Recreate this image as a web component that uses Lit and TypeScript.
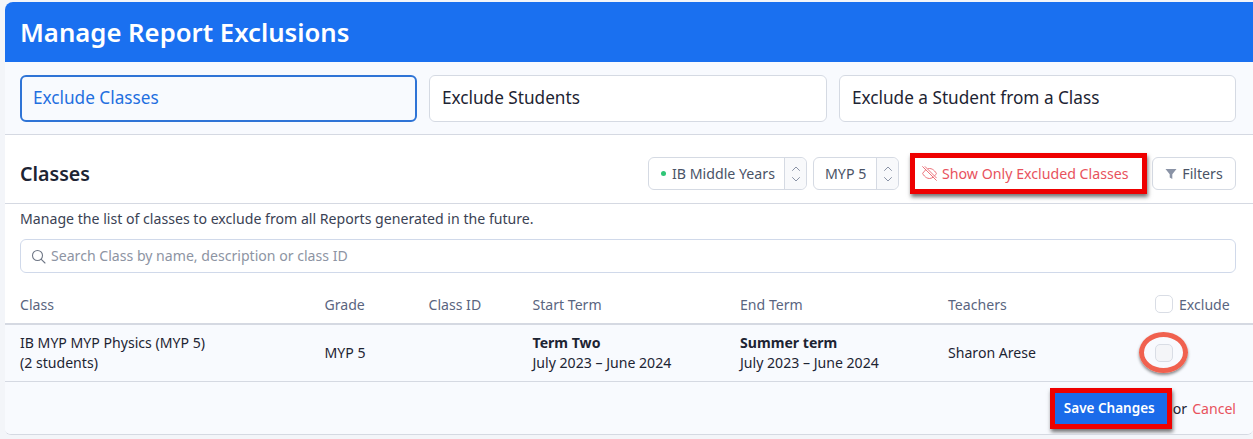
import { LitElement, html, css } from "lit";
import { customElement } from "lit/decorators.js";

const chevrons = html`<svg width="10" height="20" viewBox="0 0 10 20" fill="none" stroke="#8a93a6" stroke-width="1" stroke-linecap="round" stroke-linejoin="round"><path d="M1.5 6.5 5 3l3.5 3.5M1.5 13.5 5 17l3.5-3.5"/></svg>`;

@customElement("app-root")
export class AppRoot extends LitElement {
  static styles = css`
    :host { display: block; width: 1253px; height: 439px; overflow: hidden; background: #f3f5f9; font-family: "Noto Sans", sans-serif; color: #1d2433; position: relative; }
    * { box-sizing: border-box; }
    .panel { margin: 2px 0 0 5px; width: 1248px; height: 433px; background: #fff; border-bottom: 1px solid #d5d9e2; border-radius: 8px 0 6px 6px; display: flex; flex-direction: column; overflow: hidden; }
    .title { height: 60px; flex: none; background: #1a70f0; color: #fff; font-size: 25.7px; font-weight: 600; padding: 1px 15px 0; display: flex; align-items: center; line-height: 1; }
    .tabs { height: 73px; flex: none; background: #f8fafe; border-bottom: 1px solid #d5d9e2; display: grid; grid-template-columns: 397px 398px 397px; gap: 12px; padding: 13px 17px 12px 15px; }
    .tab { background: #fff; border: 1px solid #d5dae3; border-radius: 6px; font-size: 17.2px; line-height: 22px; padding: 0 12px 1px; display: flex; align-items: center; color: #1d2433; }
    .tab.on { background: #f8fafe; border: 2px solid #2f74d6; color: #1f6fe0; padding: 0 11px 1px; }
    .head { height: 69px; flex: none; display: flex; align-items: center; padding: 9px 17px 0 15px; border-bottom: 1px solid #d5d9e2; }
    .head h2 { margin: 0; font-size: 19.6px; font-weight: 600; flex: 1; color: #1d2433; line-height: 1; }
    .tools { display: flex; align-items: center; font-size: 14.2px; color: #4a5366; }
    .sel { height: 33px; border: 1px solid #d5dae3; border-radius: 6px; display: flex; align-items: stretch; background: #fff; }
    .sel .v { flex: 1; display: flex; align-items: center; gap: 5px; padding: 0 0 0 12px; white-space: nowrap; }
    .sel .a { width: 22px; flex: none; border-left: 1px solid #d5dae3; background: #f8f9fb; border-radius: 0 6px 6px 0; display: flex; align-items: center; justify-content: center; }
    .dot { width: 5px; height: 5px; background: #2fc677; border-radius: 50%; margin-right: 1px; }
    .s1 { width: 159px; margin-right: 6px; }
    .s2 { width: 86px; margin-right: 11px; }
    .s2 .v { padding-left: 11px; }
    .show { position: relative; width: 231px; height: 33px; display: flex; align-items: center; padding-left: 12px; gap: 5px; color: #e8525d; margin-right: 11px; white-space: nowrap; }
    .mark { position: absolute; border: 5px solid #ee0000; box-shadow: 1px 3px 4px rgba(0,0,0,.55); pointer-events: none; }
    .show .mark { left: 0; top: -4px; width: 237px; height: 41px; }
    .filters { width: 84px; height: 33px; border: 1px solid #d5dae3; border-radius: 6px; background: #fff; display: flex; align-items: center; justify-content: center; gap: 5px; }
    .desc { font-size: 14.13px; padding: 5px 15px 0; height: 35px; flex: none; line-height: 20px; color: #3a4254; }
    .search { margin: 0 17px 0 15px; height: 34px; flex: none; border: 1px solid #d0d9ea; border-radius: 6px; display: flex; align-items: center; gap: 5px; padding: 0 10px 2px; font-size: 14.1px; color: #8d94a3; }
    .search svg { margin-top: 2px; }
    .row { display: grid; grid-template-columns: 304.5px 104px 104px 207.5px 208px 1fr 81px; padding: 0 17px 0 15px; align-items: center; font-size: 14.1px; }
    .th { height: 52px; flex: none; color: #5a6580; border-bottom: 2px solid #d5d9e2; padding-top: 12px; }
    .td { height: 57px; flex: none; background: #f8fafe; border-bottom: 1px solid #d5d9e2; line-height: 20px; color: #1d2433; }
    .td b { font-weight: 700; }
    .box { width: 18px; height: 18px; border: 1px solid #d9dde5; border-radius: 5px; background: #fff; flex: none; }
    .ex { display: flex; align-items: center; gap: 6px; }
    .cell-box { position: relative; display: flex; }
    .cell-box .box { background: #f4f5f8; }
    .ring { position: absolute; left: -16px; top: -12px; width: 49px; height: 41px; border: 5px solid #f0614f; border-radius: 50%; box-shadow: 0 2px 3px rgba(0,0,0,.45); }
    .foot { flex: 1; background: #f8fafe; display: flex; align-items: center; justify-content: flex-end; padding: 0 17px 0 0; font-size: 14.1px; gap: 5px; }
    .save { position: relative; width: 112px; height: 31px; background: #1a6bea; color: #fff; font-weight: 600; font-size: 13.5px; display: flex; align-items: center; justify-content: center; padding-right: 3px; margin-right: 1px; }
    .save .mark { left: -5px; top: -5px; width: 122px; height: 41px; }
    .cancel { color: #e8525d; }
    svg { display: block; flex: none; }
  `;

  render() {
    return html`<div class="panel">
      <div class="title">Manage Report Exclusions</div>
      <div class="tabs">
        <div class="tab on">Exclude Classes</div>
        <div class="tab">Exclude Students</div>
        <div class="tab">Exclude a Student from a Class</div>
      </div>
      <div class="head">
        <h2>Classes</h2>
        <div class="tools">
          <div class="sel s1"><div class="v"><span class="dot"></span>IB Middle Years</div><div class="a">${chevrons}</div></div>
          <div class="sel s2"><div class="v">MYP 5</div><div class="a">${chevrons}</div></div>
          <div class="show">
            <svg width="15" height="15" viewBox="0 0 24 24" fill="none" stroke="#e8525d" stroke-width="1.300" stroke-linecap="round" stroke-linejoin="round"><path d="M17.900 17.900A10 10 0 0 1 12 20c-7 0-11-8-11-8a18.500 18.500 0 0 1 5-5.900M9.900 4.200A9 9 0 0 1 12 4c7 0 11 8 11 8a18.500 18.500 0 0 1-2.200 3.200M1 1l22 22M5 1l18 18"/></svg>
            <span>Show Only Excluded Classes</span>
            <div class="mark"></div>
          </div>
          <div class="filters">
            <svg width="12" height="12" viewBox="0 0 12 12" fill="#8a93a6"><path d="M0.500 1h11L7.300 6.300V11L4.700 9.500V6.300z"/></svg>
            Filters
          </div>
        </div>
      </div>
      <div class="desc">Manage the list of classes to exclude from all Reports generated in the future.</div>
      <div class="search">
        <svg width="15" height="15" viewBox="0 0 15 15" fill="none" stroke="#6f7786" stroke-width="1.100" stroke-linecap="round"><circle cx="6.500" cy="6.500" r="5"/><path d="m10.300 10.300 3.700 3.700"/></svg>
        Search Class by name, description or class ID
      </div>
      <div class="row th">
        <div>Class</div><div>Grade</div><div>Class ID</div><div>Start Term</div><div>End Term</div><div>Teachers</div>
        <div class="ex"><span class="box"></span>Exclude</div>
      </div>
      <div class="row td">
        <div>IB MYP MYP Physics (MYP 5)<br />(2 students)</div>
        <div>MYP 5</div>
        <div></div>
        <div><b>Term Two</b><br />July 2023 – June 2024</div>
        <div><b>Summer term</b><br />July 2023 – June 2024</div>
        <div>Sharon Arese</div>
        <div class="cell-box"><span class="box"></span><div class="ring"></div></div>
      </div>
      <div class="foot">
        <div class="save">Save Changes<div class="mark"></div></div>
        <span>or</span><span class="cancel">Cancel</span>
      </div>
    </div>`;
  }
}
